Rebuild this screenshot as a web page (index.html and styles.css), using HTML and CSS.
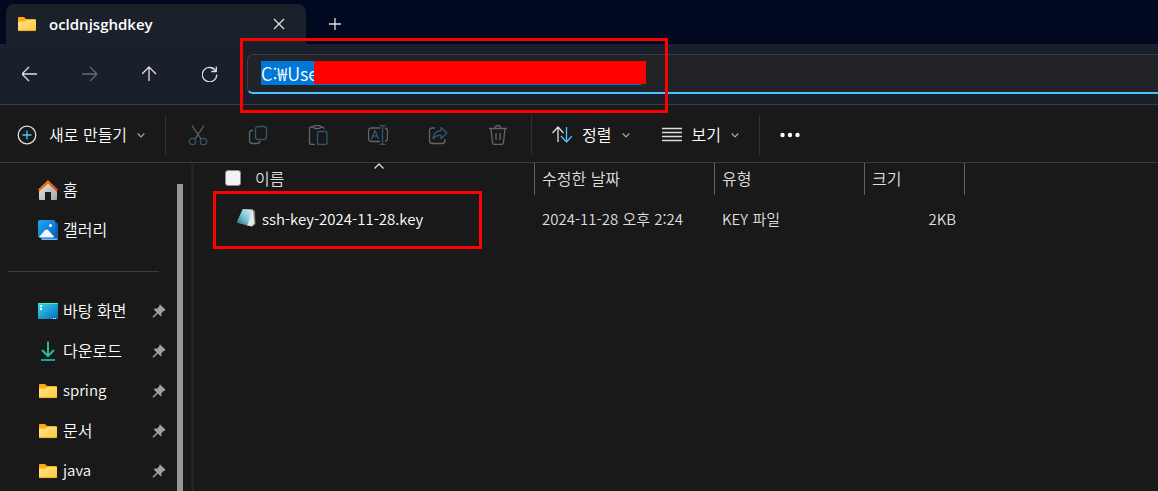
FILE: index.html
```
<!DOCTYPE html>
<html lang="ko">

<head>
    <meta charset="UTF-8" />
    <meta name="viewport" content="width=device-width, initial-scale=1.0" />
    <title>ocldnjsghdkey</title>
    <link rel="stylesheet" href="styles.css">
</head>

<body>

    <!-- shared icons -->
    <svg class="sprite" aria-hidden="true">
        <defs>
            <linearGradient id="folderFill" x1="0" y1="0" x2="1" y2="1">
                <stop offset="0" stop-color="#ffe394" />
                <stop offset="1" stop-color="#ffc937" />
            </linearGradient>
        </defs>
        <symbol id="folder" viewBox="0 0 20 20">
            <path d="M1 4q0-1 1-1h5l2 2h9q1 0 1 1v4H1z" fill="#f9ab10" />
            <path d="M1 7.500h6.500L9.500 6H18q1 0 1 1v9q0 1-1 1H2q-1 0-1-1z" fill="url(#folderFill)" />
            <path d="M1.500 16.600h17" stroke="#e9a51b" stroke-width=".8" />
        </symbol>
        <symbol id="pin" viewBox="0 0 14 14">
            <path d="M8.500.8 13.200 5.500q.6 1-.6 1.200l-1 .2-2.200 2.300.1 2.300q-.2 1.200-1.100.5L5.800 9.400 2 13.300.700 13.500l.2-1.200L4.800 8.400 2.100 5.800q-.7-1 .5-1.200l2.300.1 2.300-2.300.1-1q.3-1.200 1.200-.6z" fill="#98a2aa" />
        </symbol>
        <symbol id="chevron" viewBox="0 0 8 8">
            <path d="M.7 2.500 4 5.800l3.300-3.300" fill="none" stroke="#a8a8a8" stroke-width="1.200" />
        </symbol>
    </svg>

    <header class="title-bar">
        <div class="tab">
            <svg class="icon-20"><use href="#folder" /></svg>
            <span class="tab-title">ocldnjsghdkey</span>
            <button class="tab-button" aria-label="탭 닫기">
                <svg class="icon-12" viewBox="0 0 12 12"><path d="M1 1l10 10M11 1 1 11" class="line" /></svg>
            </button>
        </div>
        <button class="tab-button new-tab" aria-label="새 탭">
            <svg class="icon-12" viewBox="0 0 12 12"><path d="M6 0v12M0 6h12" class="line" /></svg>
        </button>
    </header>

    <div class="nav-bar">
        <nav class="nav-buttons">
            <button aria-label="뒤로">
                <svg class="icon-16" viewBox="0 0 16 16"><path d="M15 8H0M7 1 0 8l7 7" class="line" /></svg>
            </button>
            <button aria-label="앞으로" disabled>
                <svg class="icon-16" viewBox="0 0 16 16"><path d="M0 8h15M8 1l7 7-7 7" class="line" /></svg>
            </button>
            <button aria-label="위로">
                <svg class="icon-16" viewBox="0 0 16 16"><path d="M7 15V1M0 8l7-7 7 7" class="line" /></svg>
            </button>
            <button aria-label="새로 고침">
                <svg class="icon-16" viewBox="0 0 16 16"><path d="M13.700 5A7.200 7.200 0 1 0 14.700 8.500M14.300.500V5.500h-5" class="line" /></svg>
            </button>
        </nav>
        <div class="address">
            <input class="address-input" type="text" value="C:₩Use" aria-label="주소" />
            <div class="redacted"></div>
            <div class="mark mark-address"></div>
        </div>
    </div>

    <div class="toolbar">
        <button class="tool tool-new">
            <svg class="icon-20" viewBox="0 0 20 20">
                <circle cx="10" cy="10" r="8.800" class="line" />
                <path d="M10 5.500v9M5.500 10h9" class="line blue" />
            </svg>
            <span>새로 만들기</span>
            <svg class="icon-8"><use href="#chevron" /></svg>
        </button>
        <span class="separator"></span>
        <div class="tool-group">
            <button aria-label="잘라내기" disabled>
                <svg class="icon-20" viewBox="0 0 20 20">
                    <path d="M4 .500 13 14M16 .500 7 14" class="line" />
                    <circle cx="4.500" cy="16.500" r="3.200" class="line blue" />
                    <circle cx="15.500" cy="16.500" r="3.200" class="line blue" />
                </svg>
            </button>
            <button aria-label="복사" disabled>
                <svg class="icon-20" viewBox="0 0 20 20">
                    <path d="M5 5.500H4Q1.500 5.500 1.500 8v7.500q0 3 3 3H9q2.500 0 3-2.500" class="line" />
                    <rect x="7.500" y="1.500" width="11" height="13" rx="2.500" class="line blue" />
                </svg>
            </button>
            <button aria-label="붙여넣기" disabled>
                <svg class="icon-20" viewBox="0 0 20 20">
                    <path d="M6 2H3Q1.500 2 1.500 3.500v14q0 2 2 2H7M12 2h2.500Q16 2 16 4" class="line" />
                    <rect x="5.500" y=".500" width="7" height="3" rx="1.500" class="line" />
                    <rect x="9.500" y="6.500" width="9.500" height="13" rx="1.500" class="line blue" />
                </svg>
            </button>
            <button aria-label="이름 바꾸기" disabled>
                <svg class="icon-20" viewBox="0 0 20 20">
                    <path d="M12 3H3.500Q.500 3 .500 6v7.500q0 3 3 3H12M17 3q2.500.500 2.500 3v7.500q0 2.500-2.500 3" class="line" />
                    <path d="M3.500 14 7 5.500l3.500 8.500M4.700 11h4.600M11.500.500h6M11.500 19.500h6M14.500.500v19" class="line blue" />
                </svg>
            </button>
            <button aria-label="공유" disabled>
                <svg class="icon-20" viewBox="0 0 20 20">
                    <path d="M7 3H4.500q-3 0-3 3v9.500q0 3 3 3H14q3 0 3-3V14" class="line" />
                    <path d="M13 2.500 19 8l-6 5.500v-3Q8 10 5 13.500 5.500 6.500 13 5.500z" class="line blue" />
                </svg>
            </button>
            <button aria-label="삭제" disabled>
                <svg class="icon-20" viewBox="0 0 20 20">
                    <path d="M1 3.500h18M7 3.500Q7 .500 10 .500t3 3M3 3.500l1.500 14q.200 2 2 2h7q1.800 0 2-2l1.500-14M8 8v7M12 8v7" class="line" />
                </svg>
            </button>
        </div>
        <span class="separator"></span>
        <button class="tool">
            <svg class="icon-20" viewBox="0 0 20 20">
                <path d="M6 17V2M.500 8 6 2l5.500 6" class="line" />
                <path d="M14.500 2v15M9 11l5.500 6 5.500-6" class="line blue" />
            </svg>
            <span>정렬</span>
            <svg class="icon-8"><use href="#chevron" /></svg>
        </button>
        <button class="tool tool-view">
            <svg class="icon-20" viewBox="0 0 20 20"><path d="M0 3.500h20M0 7.500h20M0 11.500h20M0 15.500h20" class="line" /></svg>
            <span>보기</span>
            <svg class="icon-8"><use href="#chevron" /></svg>
        </button>
        <span class="separator"></span>
        <button class="tool" aria-label="자세히">
            <svg class="icon-20" viewBox="0 0 20 20">
                <g fill="#fff"><circle cx="2.500" cy="10" r="2.200" /><circle cx="10" cy="10" r="2.200" /><circle cx="17.500" cy="10" r="2.200" /></g>
            </svg>
        </button>
    </div>

    <div class="content">
        <aside class="sidebar">
            <div class="places">
                <a class="place" href="#home">
                    <svg class="icon-20" viewBox="0 0 20 20">
                        <defs>
                            <linearGradient id="wall" x1="0" y1="0" x2="1" y2="1">
                                <stop offset="0" stop-color="#e8e8e8" /><stop offset="1" stop-color="#a5a5a5" />
                            </linearGradient>
                            <linearGradient id="roof" x1="0" y1="0" x2="1" y2="1">
                                <stop offset="0" stop-color="#f48b12" /><stop offset="1" stop-color="#d43e0b" />
                            </linearGradient>
                        </defs>
                        <path d="M1 9 10 1l9 8v10q0 1-1 1h-5v-8H7v8H2q-1 0-1-1z" fill="url(#wall)" />
                        <path d="M10 0 20 9.500 18.800 11.500 10 3.500 1.200 11.500 0 9.500z" fill="url(#roof)" />
                    </svg>
                    <span>홈</span>
                </a>
                <a class="place" href="#gallery">
                    <svg class="icon-20" viewBox="0 0 20 20">
                        <defs>
                            <linearGradient id="photo" x1="0" y1="0" x2="1" y2="1">
                                <stop offset="0" stop-color="#22a7ee" /><stop offset="1" stop-color="#0666bd" />
                            </linearGradient>
                        </defs>
                        <path d="M18 2.500q2 0 2 2V18q0 2-2 2H5q-2 0-2-2" fill="#0a63b5" />
                        <path d="M3 18.500h17Q19.500 20 18 20H5Q3.500 20 3 18.500z" fill="#76b9ee" />
                        <rect width="17.500" height="17.500" rx="2" fill="url(#photo)" />
                        <path d="M1 17 7 10.300q1.700-1.500 3.300 0l6 6.700-1 .500H2z" fill="#eef7ff" />
                        <circle cx="12.500" cy="5.500" r="1.500" fill="#fff" />
                    </svg>
                    <span>갤러리</span>
                </a>
                <hr class="places-divider" />
                <a class="place" href="#desktop">
                    <svg class="icon-20" viewBox="0 0 20 20">
                        <defs>
                            <linearGradient id="screen" x1="0" y1="0" x2="1" y2="1">
                                <stop offset="0" stop-color="#35d9e8" /><stop offset="1" stop-color="#0b68bb" />
                            </linearGradient>
                        </defs>
                        <rect y="2" width="20" height="16" rx="1" fill="url(#screen)" />
                        <path d="M0 2.500h20" stroke="#56e1dd" />
                        <path d="M2 4h2v2H2zM2 7h2v2H2zM15 17h1v1h-1zM17 17h1v1h-1z" fill="#fff" />
                    </svg>
                    <span>바탕 화면</span>
                    <svg class="pin"><use href="#pin" /></svg>
                </a>
                <a class="place" href="#downloads">
                    <svg class="icon-20" viewBox="0 0 20 20">
                        <path d="M10 .500v14M4 9l6 6 6-6" fill="none" stroke="#25bd91" stroke-width="2" />
                        <path d="M3 19h14" stroke="#14a69d" stroke-width="2" />
                    </svg>
                    <span>다운로드</span>
                    <svg class="pin"><use href="#pin" /></svg>
                </a>
                <a class="place latin" href="#spring">
                    <svg class="icon-20"><use href="#folder" /></svg>
                    <span>spring</span>
                    <svg class="pin"><use href="#pin" /></svg>
                </a>
                <a class="place" href="#documents">
                    <svg class="icon-20"><use href="#folder" /></svg>
                    <span>문서</span>
                    <svg class="pin"><use href="#pin" /></svg>
                </a>
                <a class="place latin" href="#java">
                    <svg class="icon-20"><use href="#folder" /></svg>
                    <span>java</span>
                    <svg class="pin"><use href="#pin" /></svg>
                </a>
            </div>
            <div class="scrollbar"></div>
        </aside>

        <main class="files">
            <table>
                <colgroup>
                    <col class="col-name" />
                    <col class="col-date" />
                    <col class="col-type" />
                    <col class="col-size" />
                </colgroup>
                <thead>
                    <tr>
                        <th>
                            <label class="select-all">
                                <input type="checkbox" aria-label="모두 선택" />
                                <span>이름</span>
                            </label>
                            <svg class="sort-arrow" viewBox="0 0 10 6"><path d="M.500 5.500 5 1l4.500 4.500" class="line" /></svg>
                        </th>
                        <th>수정한 날짜</th>
                        <th>유형</th>
                        <th>크기</th>
                    </tr>
                </thead>
                <tbody>
                    <tr>
                        <td>
                            <div class="file-name">
                                <svg class="icon-20" viewBox="0 0 20 20">
                                    <defs>
                                        <linearGradient id="page" x1="0" y1="1" x2="1" y2="0">
                                            <stop offset="0" stop-color="#27616f" /><stop offset=".5" stop-color="#7cc3d5" /><stop offset="1" stop-color="#d5f3fa" />
                                        </linearGradient>
                                    </defs>
                                    <path d="M16 1 18 2l.5 13-3 2.500z" fill="#8b7d68" />
                                    <path d="M7 0 16 1l1.500 13-2.500 3.500-5-1z" fill="#dfe9ec" />
                                    <path d="M5.500.500 15 1 10.500 16.500 -.500 13.500z" fill="url(#page)" />
                                    <path d="M5.500.500 16 1" stroke="#b9c2c4" />
                                </svg>
                                <span>ssh-key-2024-11-28.key</span>
                            </div>
                            <div class="mark mark-file"></div>
                        </td>
                        <td>2024-11-28 오후 2:24</td>
                        <td>KEY 파일</td>
                        <td class="size">2KB</td>
                    </tr>
                </tbody>
            </table>
        </main>
    </div>

</body>

</html>
```
FILE: styles.css
```
* {
    box-sizing: border-box;
}

body {
    margin: 0;
    height: 100vh;
    display: flex;
    flex-direction: column;
    overflow: hidden;
    font-family: 'Noto Sans CJK KR', sans-serif;
    font-size: 16px;
    font-weight: 350;
    line-height: 24px;
    background-color: #191919;
    color: #fff;
}

button {
    display: flex;
    align-items: center;
    justify-content: center;
    padding: 0;
    border: none;
    background: none;
    color: inherit;
    font: inherit;
}

a {
    color: inherit;
    text-decoration: none;
}

svg {
    display: block;
    flex-shrink: 0;
}

.sprite {
    position: absolute;
    width: 0;
    height: 0;
}

.line {
    fill: none;
    stroke: #dedede;
    stroke-width: 1.3;
    stroke-linejoin: round;
}

.blue {
    stroke: #4cc2ff;
}

button:disabled svg {
    opacity: 0.38;
}

.icon-8 {
    width: 8px;
    height: 8px;
}

.icon-12 {
    width: 12px;
    height: 12px;
}

.icon-16 {
    width: 16px;
    height: 16px;
}

.icon-20 {
    width: 20px;
    height: 20px;
}

/* title bar */
.title-bar {
    display: flex;
    height: 44px;
    padding: 4px 6px 0;
    background-color: #000920;
}

.tab {
    display: flex;
    align-items: center;
    width: 300px;
    padding: 0 12px 0 11px;
    border-radius: 8px 8px 0 0;
    background-color: #1b212b;
}

.tab-title {
    flex: 1;
    padding-left: 12px;
    font-family: 'Open Sans', sans-serif;
    font-size: 15px;
    font-weight: 600;
}

.tab-button {
    width: 30px;
    height: 40px;
}

.new-tab {
    margin-left: 14px;
}

/* navigation and address */
.nav-bar {
    display: flex;
    align-items: center;
    height: 61px;
    background-color: #1a202b;
    border-bottom: 1px solid #3b3c3f;
}

.nav-buttons {
    display: flex;
    width: 247px;
}

.nav-buttons button {
    width: 60px;
    height: 40px;
}

.address {
    position: relative;
    flex: 1;
    height: 40px;
    padding: 6px 13px;
    border: 1px solid #393d45;
    border-right: none;
    border-bottom: 2px solid #4cc2ff;
    border-radius: 6px 0 0 6px;
    background-color: #222326;
}

.address-input {
    display: block;
    width: 380px;
    height: 24px;
    padding: 0;
    border: none;
    outline: none;
    background-color: #0078d7;
    color: #fff;
    font-family: 'Noto Sans CJK KR', sans-serif;
    font-size: 18px;
    font-weight: 350;
}

.redacted {
    position: absolute;
    top: 6px;
    left: 66px;
    width: 332px;
    height: 23px;
    background-color: #f00;
}

/* red highlight frames */
.mark {
    position: absolute;
    border: 3px solid #f00;
    pointer-events: none;
}

.mark-address {
    top: -17px;
    left: -8px;
    width: 428px;
    height: 75px;
}

.mark-file {
    top: -4px;
    left: 19px;
    width: 269px;
    height: 58px;
}

/* toolbar */
.toolbar {
    display: flex;
    align-items: center;
    height: 58px;
    padding-top: 2px;
    border-bottom: 1px solid #3c3c3c;
}

.tool {
    gap: 10px;
    height: 40px;
    margin-left: 20px;
}

.tool span {
    padding-bottom: 2px;
}

.tool-new {
    margin-left: 17px;
    margin-right: 20px;
}

.tool-new span {
    padding-left: 2px;
}

.tool-view {
    margin-left: 32px;
    margin-right: 20px;
}

.tool-group {
    display: flex;
    padding: 0 3px 0 2px;
}

.tool-group button {
    width: 60px;
    height: 40px;
}

.separator {
    width: 1px;
    height: 40px;
    background-color: #303030;
}

/* content */
.content {
    display: flex;
    flex: 1;
    min-height: 0;
}

.sidebar {
    display: flex;
    width: 194px;
    border-right: 3px solid #242424;
}

.places {
    width: 177px;
    padding: 7px 11px 0 8px;
}

.place {
    display: flex;
    align-items: center;
    gap: 5px;
    height: 40px;
    padding-left: 30px;
}

.place span {
    padding-bottom: 2px;
}

.latin {
    font-size: 15px;
}

.places-divider {
    height: 1px;
    margin: 21px 7px 19px 0;
    border: none;
    background-color: #3b3b3b;
}

.pin {
    width: 14px;
    height: 14px;
    margin-left: auto;
}

.scrollbar {
    width: 6px;
    margin-top: 21px;
    background-color: #969696;
}

.files {
    flex: 1;
}

table {
    width: 771px;
    table-layout: fixed;
    border-collapse: separate;
    border-spacing: 0;
}

.col-name {
    width: 341px;
}

.col-date {
    width: 180px;
}

.col-type {
    width: 150px;
}

.col-size {
    width: 100px;
}

th {
    position: relative;
    height: 32px;
    padding: 0 7px 2px;
    border-right: 1px solid #626262;
    color: #dedede;
    font-weight: inherit;
    text-align: left;
}

td {
    position: relative;
    height: 48px;
    padding: 0 7px;
    color: #dedede;
    font-size: 15px;
}

.select-all {
    display: flex;
    align-items: center;
    gap: 14px;
    padding-left: 24px;
}

.select-all input {
    appearance: none;
    width: 16px;
    height: 16px;
    margin: 0;
    border: 1px solid #8d8d8d;
    border-radius: 3px;
    background-color: #f3f3f3;
}

.sort-arrow {
    position: absolute;
    top: 0;
    left: 180px;
    width: 10px;
    height: 6px;
}

.file-name {
    display: flex;
    align-items: center;
    gap: 5px;
    padding-left: 36px;
    color: #fff;
}

.size {
    padding-right: 9px;
    text-align: right;
}
```
